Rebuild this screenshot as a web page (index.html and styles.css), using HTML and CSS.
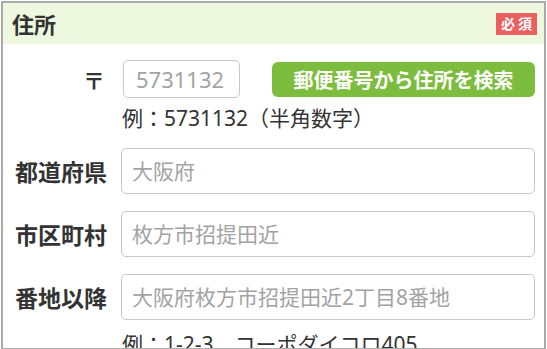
FILE: index.html
```html
<!DOCTYPE html>
<html lang="ja">
<head>
    <meta charset="UTF-8">
    <meta name="viewport" content="width=device-width, initial-scale=1.0">
    <title>住所入力</title>
    <link rel="stylesheet" href="styles.css">
</head>
<body>

    <section class="form-box">
        <!-- Header -->
        <div class="form-head">
            <h2>住所</h2>
            <span class="badge">必須</span>
        </div>

        <div class="form-body">
            <!-- Zip -->
            <div class="row zip-row">
                <label class="label zip-mark" for="zip">〒</label>
                <div class="field">
                    <input id="zip" class="input input-zip" type="text" placeholder="5731132">
                    <button class="btn">郵便番号から住所を検索</button>
                </div>
            </div>
            <p class="note">例：5731132（半角数字）</p>

            <div class="row">
                <label class="label" for="pref">都道府県</label>
                <div class="field">
                    <input id="pref" class="input" type="text" placeholder="大阪府">
                </div>
            </div>

            <div class="row">
                <label class="label" for="city">市区町村</label>
                <div class="field">
                    <input id="city" class="input" type="text" placeholder="枚方市招提田近">
                </div>
            </div>

            <div class="row">
                <label class="label" for="addr">番地以降</label>
                <div class="field">
                    <input id="addr" class="input" type="text" placeholder="大阪府枚方市招提田近2丁目8番地">
                </div>
            </div>
            <p class="note note-last">例：1-2-3　コーポダイコロ405</p>
        </div>
    </section>

</body>
</html>
```

FILE: styles.css
```css
/* General Styles */
body {
    font-family: "Noto Sans", "Noto Sans CJK JP", sans-serif;
    margin: 0;
    padding: 1px;
    color: #333;
    background: #fff;
}

/* Frame */
.form-box {
    width: 541px;
    height: 345px;
    border: 2px solid #ababab;
    overflow: hidden;
}

/* Header */
.form-head {
    height: 41px;
    background: #eef8df;
    display: flex;
    align-items: center;
    justify-content: space-between;
    padding: 0 7px 0 9px;
}

.form-head h2 {
    margin: 0;
    font-size: 22px;
    font-weight: bold;
    line-height: 1;
}

.badge {
    background: #e9605f;
    color: #fff;
    font-size: 14px;
    font-weight: bold;
    letter-spacing: 3px;
    width: 41px;
    height: 22px;
    line-height: 22px;
    text-align: center;
    text-indent: 3px;
    margin-top: 1px;
}

/* Body */
.form-body {
    padding: 16px 9px 0 0;
}

.row {
    display: flex;
    align-items: center;
    margin-top: 17px;
}

.zip-row {
    margin-top: 0;
}

.label {
    width: 104px;
    padding-right: 14px;
    text-align: right;
    font-size: 23px;
    font-weight: bold;
}

.zip-mark {
    font-size: 22px;
    padding-right: 16px;
}

.field {
    flex: 1;
    display: flex;
    align-items: center;
}

.input {
    width: 100%;
    height: 46px;
    box-sizing: border-box;
    border: 1px solid #c8c8c8;
    border-radius: 5px;
    padding: 0 10px;
    font-family: inherit;
    font-size: 21px;
    color: #333;
}

.input::placeholder {
    color: #a3a3a3;
}

.input-zip {
    width: 117px;
    height: 38px;
    margin-left: 2px;
    padding: 0 12px;
    font-size: 22px;
}

.btn {
    margin-left: 32px;
    width: 263px;
    height: 35px;
    background: #7dbd3e;
    color: #fff;
    border: none;
    border-radius: 6px;
    font-family: inherit;
    font-size: 20px;
    font-weight: bold;
    padding: 0;
}

.note {
    margin: 7px 0 0 119px;
    font-size: 21px;
    line-height: 26px;
}

.note-last {
    margin-top: 11px;
}
```
